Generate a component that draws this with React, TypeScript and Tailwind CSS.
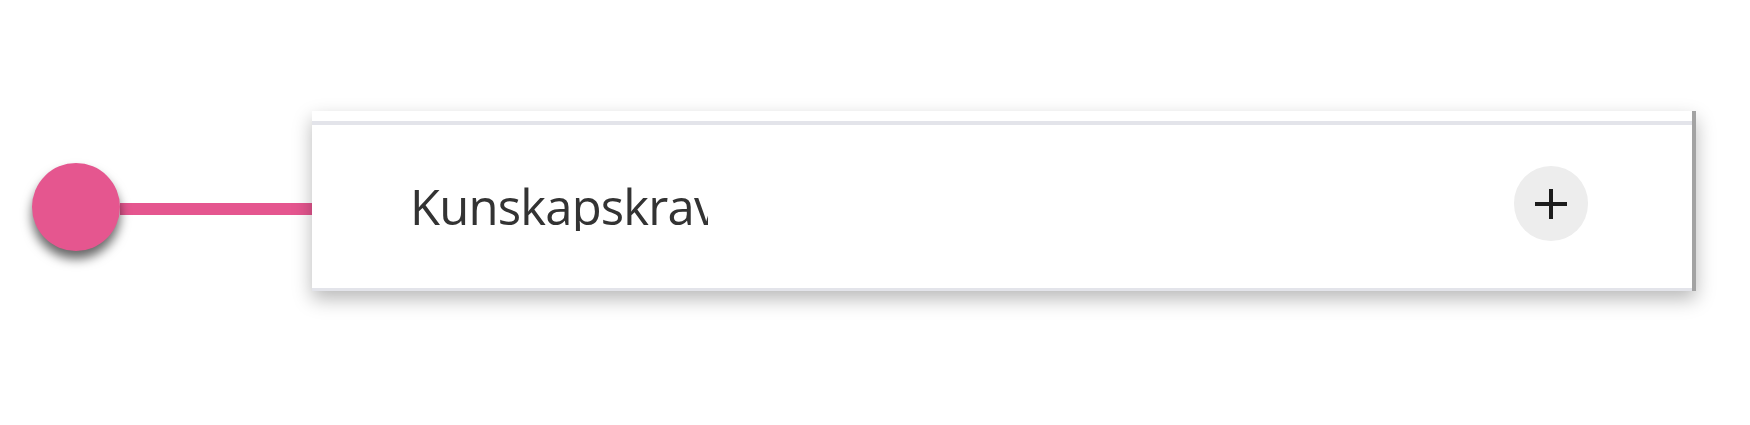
export default function App() {
  return (
    <div className="h-[425px] w-[1750px] bg-white pl-[32px] pt-[111px]">
      <div className="flex items-start">
        <div className="relative z-10 mt-[52px] h-[88px] w-[88px] shrink-0 rounded-full bg-[#e5568f] shadow-[0_8px_11px_rgba(0,0,0,0.6)]" />
        <div className="mt-[92px] h-[12px] w-[192px] shrink-0 bg-[#e5568f]" />
        <div className="flex h-[180px] w-[1384px] shrink-0 flex-col border-r-4 border-[#a3a3a3] bg-white shadow-[0_8px_18px_rgba(0,0,0,0.28)]">
          <div className="h-[10px] bg-white" />
          <div className="h-[4px] bg-[#e3e4ea]" />
          <div className="flex h-[163px] items-center justify-between pl-[98px] pr-[104px]">
            <div className="w-[298px] overflow-hidden whitespace-nowrap font-['Open_Sans',sans-serif] text-[49px] leading-none tracking-[-0.8px] text-[#333333]">
              Kunskapskrav
            </div>
            <button className="mb-[6px] flex h-[75px] w-[74px] items-center justify-center rounded-full bg-[#ededed]">
              <svg width="32" height="30" viewBox="0 0 32 30">
                <path d="M0 15H32M16 0V30" stroke="#1c1c1c" strokeWidth="4" />
              </svg>
            </button>
          </div>
          <div className="h-[3px] bg-[#e3e4ea]" />
        </div>
      </div>
    </div>
  );
}
